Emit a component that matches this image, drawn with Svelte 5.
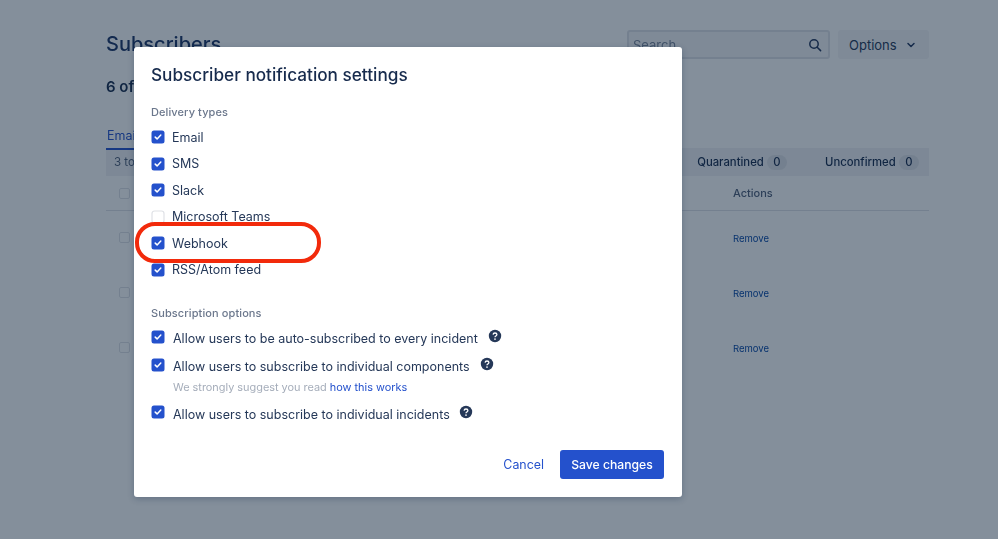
<script>
  const delivery = [
    { label: 'Email', on: true },
    { label: 'SMS', on: true },
    { label: 'Slack', on: true },
    { label: 'Microsoft Teams', on: false },
    { label: 'Webhook', on: true },
    { label: 'RSS/Atom feed', on: true }
  ];
  const rows = [0, 1, 2];
</script>

<div class="page">
  <header class="top">
    <h1>Subscribers</h1>
    <div class="tools">
      <div class="search">
        <span>Search</span>
        <svg width="14" height="14" viewBox="0 0 14 14" fill="none" stroke="#22355c" stroke-width="1.5"><circle cx="6" cy="6" r="4.2"/><path d="M9.2 9.2 12.6 12.6" stroke-linecap="round"/></svg>
      </div>
      <div class="options">
        <span>Options</span>
        <svg width="10" height="10" viewBox="0 0 10 10" fill="none" stroke="#22355c" stroke-width="1.5"><path d="M2 3.5 5 6.5 8 3.5" stroke-linecap="round" stroke-linejoin="round"/></svg>
      </div>
    </div>
  </header>
  <div class="count">6 of</div>
  <div class="tabs"><span class="tab">Email</span></div>
  <div class="strip">
    <span class="range">3 total</span>
    <span class="filters">
      <span class="filter">Quarantined <b>0</b></span>
      <span class="filter">Unconfirmed <b>0</b></span>
    </span>
  </div>
  <div class="thead"><span class="box"></span><span class="actions">Actions</span></div>
  {#each rows as r}
    <div class="row"><span class="box up"></span><a class="remove" href="#top">Remove</a></div>
  {/each}
</div>

<div class="scrim"></div>

<div class="modal">
  <h2>Subscriber notification settings</h2>
  <h3>Delivery types</h3>
  <div class="list">
    {#each delivery as d}
      <div class="check">
        {#if d.on}
          <svg class="cb" width="14" height="14" viewBox="0 0 14 14"><rect x="0.5" y="0.5" width="13" height="13" rx="2.5" fill="#2451cc"/><path d="M4.2 7.1 6.1 8.9 9.8 5.1" fill="none" stroke="#fff" stroke-width="1.5" stroke-linecap="round" stroke-linejoin="round"/></svg>
        {:else}
          <svg class="cb" width="14" height="14" viewBox="0 0 14 14"><rect x="1" y="1" width="12" height="12" rx="2.5" fill="#fff" stroke="#dfe1e6" stroke-width="1.2"/></svg>
        {/if}
        <span>{d.label}</span>
      </div>
    {/each}
  </div>

  <h3 class="sub">Subscription options</h3>
  <div class="opt first">
    <svg class="cb" width="14" height="14" viewBox="0 0 14 14"><rect x="0.5" y="0.5" width="13" height="13" rx="2.5" fill="#2451cc"/><path d="M4.2 7.1 6.1 8.9 9.8 5.1" fill="none" stroke="#fff" stroke-width="1.5" stroke-linecap="round" stroke-linejoin="round"/></svg>
    <span class="txt">Allow users to be auto-subscribed to every incident</span>
    <svg class="help" width="14" height="14" viewBox="0 0 14 14"><circle cx="7" cy="7" r="6.2" fill="#253858"/><path d="M5.1 5.6C5.2 4.5 6 4 7 4c1.1 0 1.9.6 1.9 1.6 0 1.4-1.9 1.4-1.9 2.6" fill="none" stroke="#fff" stroke-width="1.3"/><circle cx="7" cy="10.1" r=".85" fill="#fff"/></svg>
  </div>
  <div class="opt second">
    <svg class="cb" width="14" height="14" viewBox="0 0 14 14"><rect x="0.5" y="0.5" width="13" height="13" rx="2.5" fill="#2451cc"/><path d="M4.2 7.1 6.1 8.9 9.8 5.1" fill="none" stroke="#fff" stroke-width="1.5" stroke-linecap="round" stroke-linejoin="round"/></svg>
    <span class="txt">Allow users to subscribe to individual components</span>
    <svg class="help" width="14" height="14" viewBox="0 0 14 14"><circle cx="7" cy="7" r="6.2" fill="#253858"/><path d="M5.1 5.6C5.2 4.5 6 4 7 4c1.1 0 1.9.6 1.9 1.6 0 1.4-1.9 1.4-1.9 2.6" fill="none" stroke="#fff" stroke-width="1.3"/><circle cx="7" cy="10.1" r=".85" fill="#fff"/></svg>
  </div>
  <p class="hint">We strongly suggest you read <a href="#top">how this works</a></p>
  <div class="opt third">
    <svg class="cb" width="14" height="14" viewBox="0 0 14 14"><rect x="0.5" y="0.5" width="13" height="13" rx="2.5" fill="#2451cc"/><path d="M4.2 7.1 6.1 8.9 9.8 5.1" fill="none" stroke="#fff" stroke-width="1.5" stroke-linecap="round" stroke-linejoin="round"/></svg>
    <span class="txt">Allow users to subscribe to individual incidents</span>
    <svg class="help" width="14" height="14" viewBox="0 0 14 14"><circle cx="7" cy="7" r="6.2" fill="#253858"/><path d="M5.1 5.6C5.2 4.5 6 4 7 4c1.1 0 1.9.6 1.9 1.6 0 1.4-1.9 1.4-1.9 2.6" fill="none" stroke="#fff" stroke-width="1.3"/><circle cx="7" cy="10.1" r=".85" fill="#fff"/></svg>
  </div>
  <footer>
    <a class="cancel" href="#top">Cancel</a>
    <button type="button">Save changes</button>
  </footer>
</div>

<div class="ring"></div>

<style>
  :global(body) {
    margin: 0;
    background: #fff;
    font-family: Inter, "Liberation Sans", sans-serif;
    overflow: hidden;
  }
  .page {
    width: 823px;
    height: 539px;
    box-sizing: border-box;
    margin-left: 106px;
    padding-top: 30px;
    color: #172b4d;
    filter: blur(0.35px);
  }
  .top { display: flex; justify-content: space-between; height: 29px; }
  h1 { margin: 0; font-size: 20px; font-weight: 500; line-height: 29px; color: #1c3567; }
  .tools { display: flex; gap: 8px; }
  .search {
    width: 203px; box-sizing: border-box; border: 2px solid #dfe1e6; border-radius: 3px;
    display: flex; align-items: center; justify-content: space-between; padding: 0 6px 0 4px;
    font-size: 13px; color: #7a869a; background: #f4f5f7;
  }
  .options {
    width: 91px; box-sizing: border-box; padding-left: 11px; border-radius: 3px; background: #f4f5f7; display: flex; align-items: center;
    gap: 9px; font-size: 13px; color: #253858;
  }
  .count { margin-top: 18px; font-size: 15px; font-weight: 600; line-height: 20px; }
  .tabs { margin-top: 27px; height: 24px; }
  .tab { display: inline-block; font-size: 12.5px; line-height: 19px; padding: 0 1px 3px 1px; color: #2451cc; border-bottom: 2px solid #2451cc; }
  .strip {
    height: 28px; background: #f0f1f4; display: flex; align-items: center; justify-content: space-between;
    font-size: 11.5px; color: #505f79; padding: 0 10px 0 8px;
  }
  .filters { display: flex; gap: 38px; font-size: 11.3px; font-weight: 500; color: #172b4d; }
  .filter b { display: inline-block; font-weight: 500; background: #dfe1e6; border-radius: 8px; padding: 0 6.5px; line-height: 15px; }
  .thead {
    height: 34px; border-bottom: 1px solid #dfe1e6; display: flex; align-items: center; padding-left: 13px; position: relative;
  }
  .actions { position: absolute; left: 627px; font-size: 11px; font-weight: 500; color: #505f79; }
  .box { width: 9px; height: 9px; border: 1.5px solid #dfe1e6; border-radius: 2px; display: block; }
  .box.up { margin-top: -2px; }
  .row { height: 55px; display: flex; align-items: center; padding-left: 13px; position: relative; }
  .remove { position: absolute; left: 627px; font-size: 9.5px; color: #0747a6; text-decoration: none; }
  .scrim { position: fixed; inset: 0; background: rgba(10, 32, 56, 0.5); }

  .modal {
    position: fixed; left: 134px; top: 47px; width: 548px; height: 450px; box-sizing: border-box;
    background: #fff; border-radius: 3px; padding: 16px 18px 0 17px; color: #253858;
    box-shadow: 0 2px 6px rgba(9, 30, 66, 0.25);
    filter: blur(0.35px);
  }
  h2 { margin: 0; font-size: 17.2px; font-weight: 500; line-height: 23px; color: #172b4d; }
  h3 { margin: 19px 0 0; font-size: 11px; font-weight: 500; line-height: 14px; color: #6b778c; letter-spacing: .1px; }
  h3.sub { margin-top: 22.5px; }
  .list { margin-top: 5px; display: flex; flex-direction: column; }
  .check { height: 26.5px; display: flex; align-items: center; gap: 7px; font-size: 12.5px; }
  .cb { flex: none; display: block; }
  .opt { display: flex; font-size: 12.5px; line-height: 18px; }
  .opt .txt { margin-left: 8px; }
  .opt .help { margin-left: 10px; margin-top: -1px; flex: none; }
  .opt.first { margin-top: 10.5px; }
  .opt.second { margin-top: 10px; }
  .opt.third { margin-top: 11px; }
  .opt.third .txt { padding-top: 1px; }
  .opt.third .help { margin-top: 0; margin-left: 9px; }
  .hint { margin: 4px 0 0 22px; font-size: 10.9px; line-height: 14px; color: #a5adba; }
  .hint a { color: #2451cc; text-decoration: none; }
  footer { display: flex; justify-content: flex-end; align-items: center; gap: 16px; margin-top: 26px; }
  .cancel { font-size: 12.4px; color: #2451cc; text-decoration: none; }
  button {
    width: 104px; height: 29px; border: 0; border-radius: 3px; background: #2451cc; color: #fff;
    font: 500 12.2px Inter, "Liberation Sans", sans-serif;
  }
  .ring {
    position: fixed; left: 135px; top: 222px; width: 186px; height: 41px; box-sizing: border-box;
    border: 4px solid #f22a0b; border-radius: 20px;
  }
</style>
